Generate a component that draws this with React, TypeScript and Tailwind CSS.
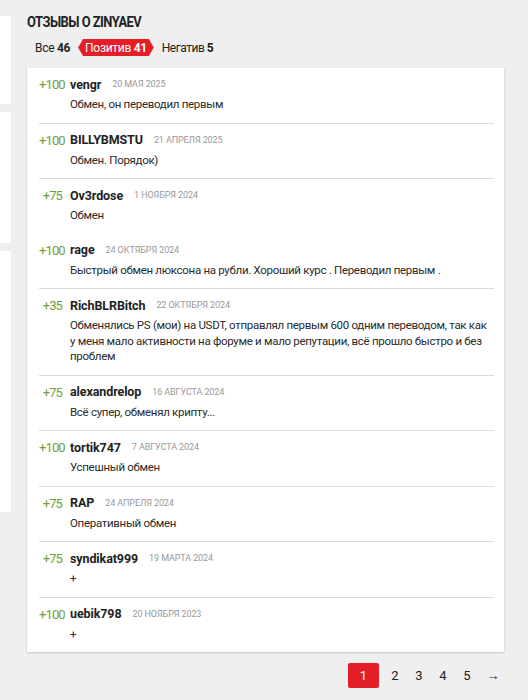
import React from "react";

type Review = {
    score: string;
    name: string;
    date: string;
    text: string;
    noBorder?: boolean;
};

const reviews: Review[] = [
    { score: "+100", name: "vengr", date: "20 мая 2025", text: "Обмен, он переводил первым" },
    { score: "+100", name: "BILLYBMSTU", date: "21 апреля 2025", text: "Обмен. Порядок)" },
    { score: "+75", name: "Ov3rdose", date: "1 ноября 2024", text: "Обмен", noBorder: true },
    {
        score: "+100",
        name: "rage",
        date: "24 октября 2024",
        text: "Быстрый обмен люксона на рубли. Хороший курс . Переводил первым .",
    },
    {
        score: "+35",
        name: "RichBLRBitch",
        date: "22 октября 2024",
        text: "Обменялись PS (мои) на USDT, отправлял первым 600 одним переводом, так как у меня мало активности на форуме и мало репутации, всё прошло быстро и без проблем",
    },
    { score: "+75", name: "alexandrelop", date: "16 августа 2024", text: "Всё супер, обменял крипту..." },
    { score: "+100", name: "tortik747", date: "7 августа 2024", text: "Успешный обмен" },
    { score: "+75", name: "RAP", date: "24 апреля 2024", text: "Оперативный обмен" },
    { score: "+75", name: "syndikat999", date: "19 марта 2024", text: "+" },
    { score: "+100", name: "uebik798", date: "20 ноября 2023", text: "+" },
];

function ReviewRow({ r, last }: { r: Review; last: boolean }) {
    return (
        <div
            className={`flex gap-2 pt-[8px] pb-[10px] ${
                last || r.noBorder ? "" : "border-b border-[#dcdcdc]"
            }`}
        >
            <div className="w-[23px] shrink-0 text-right text-[13px] leading-[18px] tracking-[-0.9px] text-[#72a03a]">
                {r.score}
            </div>
            <div className="min-w-0 flex-1">
                <div className="flex h-[18px] items-center gap-[11px]">
                    <span className="text-[12.5px] font-bold tracking-[-0.1px] text-[#222]">{r.name}</span>
                    <span className="text-[9px] uppercase tracking-[-0.1px] text-[#999]">{r.date}</span>
                </div>
                <div className="mt-[3px] text-[11.5px] leading-[15.5px] tracking-[-0.3px] text-[#2a2a2a]">
                    {r.text}
                </div>
            </div>
        </div>
    );
}

export default function App() {
    return (
        <div className="min-h-[700px] w-[528px] bg-[#efefef] font-['Roboto',sans-serif]">
            <div className="flex gap-4">
                {/* left side panels, cut off */}
                <div className="flex w-[11px] shrink-0 flex-col gap-2 pt-4">
                    <div className="h-[88px] bg-white" />
                    <div className="h-[131px] bg-white" />
                    <div className="h-[261px] bg-white" />
                </div>

                <div className="w-[477px] shrink-0">
                    <h2 className="pt-[13px] text-[15px] leading-[18px] font-bold tracking-[-0.6px] text-[#222] origin-left scale-x-[0.86]">
                        ОТЗЫВЫ О ZINYAEV
                    </h2>

                    <div className="mt-[8px] flex h-[17px] items-center pl-2 text-[12px] tracking-[-0.3px] text-[#222]">
                        <span>
                            Все <b>46</b>
                        </span>
                        <span className="ml-[8px] flex h-[17px] items-center bg-[#e41e26] px-[7px] text-white [clip-path:polygon(5px_0,calc(100%-5px)_0,100%_50%,calc(100%-5px)_100%,5px_100%,0_50%)]">
                            Позитив&nbsp;<b>41</b>
                        </span>
                        <span className="ml-[8px] tracking-[-0.5px]">
                            Негатив <b>5</b>
                        </span>
                    </div>

                    <div className="mt-[12px] bg-white pl-3 pr-[10px] shadow-[0_1px_2px_rgba(0,0,0,0.18)]">
                        {reviews.map((r, i) => (
                            <ReviewRow key={r.name} r={r} last={i === reviews.length - 1} />
                        ))}
                    </div>

                    <div className="mt-[11px] flex items-center justify-end gap-[8px] pr-[1px] text-[13px] text-[#222]">
                        <span className="flex h-[25px] w-[31px] items-center justify-center rounded-[2px] bg-[#e41e26] text-white">
                            1
                        </span>
                        <span className="w-4 text-center">2</span>
                        <span className="w-4 text-center">3</span>
                        <span className="w-4 text-center">4</span>
                        <span className="w-4 text-center">5</span>
                        <span className="w-5 text-center">→</span>
                    </div>
                </div>
            </div>
        </div>
    );
}
